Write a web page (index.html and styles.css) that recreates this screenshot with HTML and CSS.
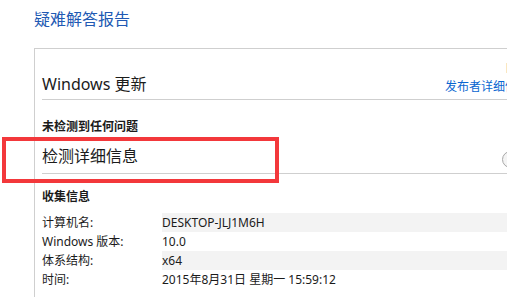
FILE: index.html
```html
<!DOCTYPE html>
<html lang="zh-CN">
<head>
<meta charset="utf-8">
<link rel="stylesheet" href="styles.css">
</head>
<body>
<div class="page">
  <div class="title">疑难解答报告</div>
  <div class="panel">
    <div class="section-head">
      <div class="section-title">Windows 更新</div>
      <div class="section-side">
        <div class="side-gray">自动</div>
        <div class="side-link">发布者详细信息</div>
      </div>
    </div>
    <div class="status">未检测到任何问题</div>
    <div class="detail-head">
      <div class="detail-title">检测详细信息</div>
      <span class="expand"></span>
    </div>
    <div class="collect">收集信息</div>
    <div class="info">
      <div class="row shade"><span class="lbl">计算机名:</span><span class="val">DESKTOP-JLJ1M6H</span></div>
      <div class="row"><span class="lbl">Windows 版本:</span><span class="val">10.0</span></div>
      <div class="row shade"><span class="lbl">体系结构:</span><span class="val">x64</span></div>
      <div class="row"><span class="lbl">时间:</span><span class="val">2015年8月31日 星期一 15:59:12</span></div>
    </div>
  </div>
  <div class="mark"></div>
</div>
</body>
</html>
```

FILE: styles.css
```css
html, body { margin: 0; padding: 0; background: #fff; }
.page {
  position: relative;
  width: 507px;
  height: 297px;
  overflow: hidden;
  font-family: "Noto Sans", "Noto Sans CJK SC", sans-serif;
  color: #1b1b1b;
}
.title {
  height: 48px;
  box-sizing: border-box;
  padding: 8px 0 0 34px;
  font-size: 16px;
  line-height: 22px;
  color: #2159b3;
}
.panel {
  margin-left: 34px;
  border-top: 1px solid #cfcfcf;
  border-left: 1px solid #cfcfcf;
  padding-left: 7px;
  height: 300px;
}
.section-head {
  display: flex;
  justify-content: space-between;
  align-items: flex-end;
  height: 50px;
  border-bottom: 1px solid #cfcfcf;
  width: 600px;
}
.section-title {
  font-size: 16px;
  line-height: 22px;
  padding-bottom: 4px;
}
.section-side {
  width: 197px;
  display: flex;
  flex-direction: column;
  font-size: 12px;
  line-height: 17px;
  padding-bottom: 4px;
}
.side-gray { color: #666; padding-left: 60px; margin-bottom: 2px; }
.side-link { color: #0a66d0; }
.status {
  margin-top: 19px;
  font-size: 12px;
  line-height: 16px;
  font-weight: bold;
}
.detail-head {
  display: flex;
  align-items: center;
  height: 39px;
  width: 600px;
  border-bottom: 1px solid #cfcfcf;
  box-sizing: border-box;
  position: relative;
}
.detail-title {
  font-size: 16px;
  line-height: 22px;
  padding-top: 3px;
}
.expand {
  position: absolute;
  left: 460px;
  top: 16px;
  width: 15px;
  height: 15px;
  border: 1px solid #a8a8a8;
  border-radius: 50%;
  background: #f4f4f4;
}
.collect {
  margin-top: 15px;
  font-size: 12px;
  line-height: 16px;
  font-weight: bold;
}
.info { margin-top: 8px; }
.row {
  display: flex;
  height: 19px;
  font-size: 12px;
  line-height: 19px;
}
.lbl { width: 120px; }
.val { flex: 1; }
.shade .val { background: #f3f3f3; }
.mark {
  position: absolute;
  left: 2px;
  top: 137px;
  width: 277px;
  height: 46px;
  box-sizing: border-box;
  border: 4px solid #f3383b;
}
```
